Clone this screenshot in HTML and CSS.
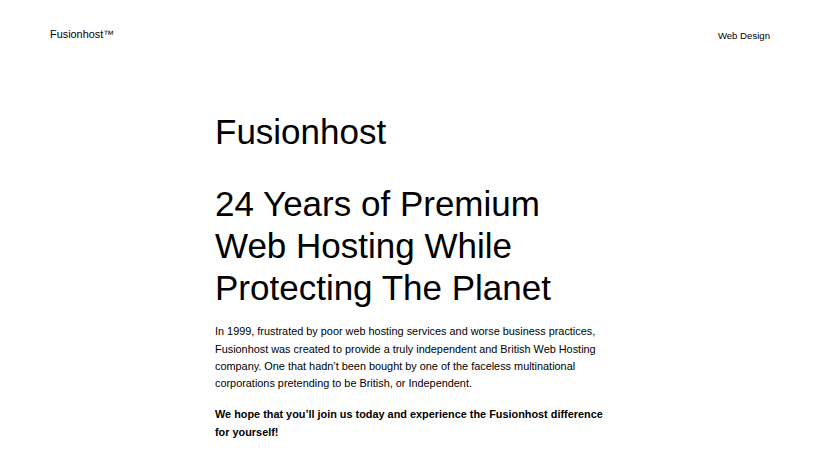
FILE: index.html
```html
<!DOCTYPE html>
<html lang="en">
<head>
<meta charset="utf-8">
<title>Fusionhost</title>
<link rel="stylesheet" href="styles.css">
</head>
<body>
<header class="site-header">
  <div class="brand">Fusionhost™</div>
  <nav class="nav"><a href="#">Web Design</a></nav>
</header>
<main class="content">
  <h1 class="title">Fusionhost</h1>
  <h2 class="headline">24 Years of Premium Web Hosting While Protecting The Planet</h2>
  <p class="lead">In 1999, frustrated by poor web hosting services and worse business practices, Fusionhost was created to provide a truly independent and British Web Hosting company. One that hadn’t been bought by one of the faceless multinational corporations pretending to be British, or Independent.</p>
  <p class="lead strong">We hope that you’ll join us today and experience the Fusionhost difference for yourself!</p>
</main>
</body>
</html>
```
FILE: styles.css
```css
html, body {
  margin: 0;
  padding: 0;
  background: #fff;
  color: #000;
  font-family: "Liberation Sans", Arial, sans-serif;
}
.site-header {
  display: flex;
  justify-content: space-between;
  align-items: center;
  padding: 26px 50px 0;
  height: 16px;
}
.brand {
  font-size: 10.88px;
}
.nav a {
  font-size: 9.6px;
  color: #000;
  text-decoration: none;
}
.content {
  width: 390px;
  margin: 0 auto;
  padding-top: 69px;
}
.title {
  font-size: 35px;
  font-weight: 400;
  line-height: 42px;
  margin: 0 0 30px;
}
.headline {
  font-size: 35px;
  font-weight: 400;
  line-height: 42.2px;
  margin: 0 0 13.5px;
}
.lead {
  font-size: 10.88px;
  line-height: 17.4px;
  margin: 0 0 13.6px;
}
.strong {
  font-weight: 700;
}
```
